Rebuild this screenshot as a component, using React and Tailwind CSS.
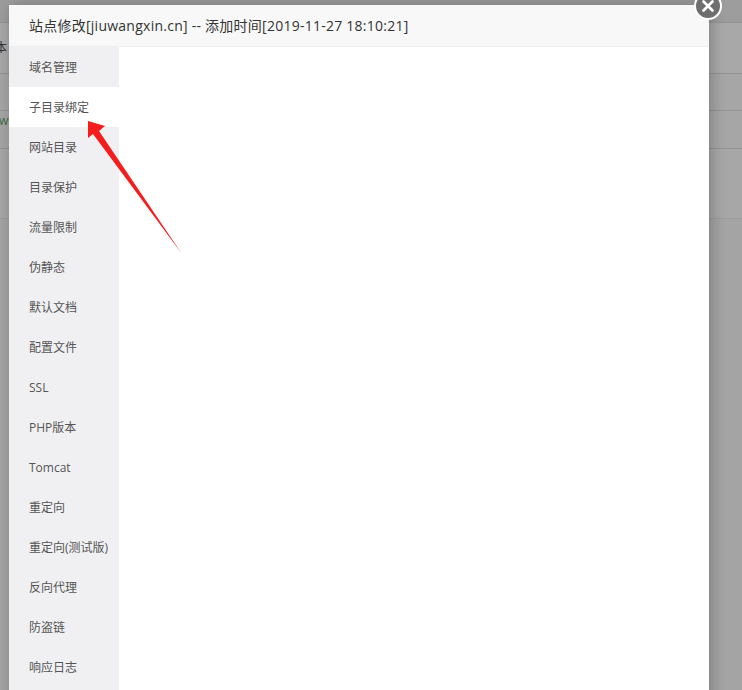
import React from 'react'

const menu = [
  '域名管理', '子目录绑定', '网站目录', '目录保护', '流量限制', '伪静态', '默认文档', '配置文件',
  'SSL', 'PHP版本', 'Tomcat', '重定向', '重定向(测试版)', '反向代理', '防盗链', '响应日志',
]

const font = { fontFamily: '"Open Sans", "Noto Sans CJK SC", sans-serif' }

export default function App() {
  return (
    <div className="relative w-[742px] h-[690px] overflow-hidden bg-[#a4a4a4]" style={font}>
      {/* page behind the overlay */}
      <div className="flex flex-col">
        <div className="h-[22px] bg-[#9d9d9d]" />
        <div className="h-[51px] border-t border-[#949494] bg-[#a8a8a8] flex items-center text-[12px] text-[#333]">
          <span className="-ml-[5px]">本</span>
        </div>
        <div className="h-[37px] border-t border-[#939393] bg-[#a6a6a6]" />
        <div className="h-[38px] border-t border-[#939393] bg-[#a6a6a6] flex items-center text-[12px] text-[#3f6b3f]">
          <span className="-ml-[1px] -mt-[18px]">ww</span>
        </div>
        <div className="h-[70px] border-t border-[#939393] bg-[#a7a7a7]" />
        <div className="flex-1 border-t border-[#9c9c9c] bg-[#a3a3a3] h-[472px]" />
      </div>

      {/* dialog */}
      <div className="absolute left-[9px] top-[5px] w-[700px] h-[700px] bg-white shadow-[2px_0_14px_rgba(0,0,0,0.25)] flex flex-col">
        <div className="h-[42px] shrink-0 bg-[#f8f8f8] border-b border-[#eeeeee] pl-[20px] flex items-center text-[14px] tracking-[0.25px] text-[#333]">
          站点修改[jiuwangxin.cn] -- 添加时间[2019-11-27 18:10:21]
        </div>
        <div className="flex flex-1">
          <ul className="w-[110px] bg-[#f0f0f2] flex flex-col">
            {menu.map((m, i) => (
              <li
                key={m}
                className={`h-[40px] shrink-0 pl-[20px] pt-[1px] flex items-center text-[12px] text-[#555] ${i === 1 ? 'bg-white' : ''}`}
              >
                {m}
              </li>
            ))}
          </ul>
          <div className="flex-1 bg-white" />
        </div>
        <button className="absolute left-[685px] top-[-13px] w-[28px] h-[28px] rounded-full bg-[#6e6e6e] border-2 border-white flex items-center justify-center">
          <svg width="14" height="14" viewBox="0 0 14 14">
            <path d="M2.5 2.5 L11.5 11.5 M11.5 2.5 L2.5 11.5" stroke="#fff" strokeWidth="2.6" strokeLinecap="round" />
          </svg>
        </button>
      </div>

      {/* annotation arrow */}
      <svg className="absolute left-0 top-0 pointer-events-none" width="742" height="690">
        <polygon points="88,121 105,126 99,131 182,254 93,134 88,138" fill="#f41e1e" />
      </svg>
    </div>
  )
}
